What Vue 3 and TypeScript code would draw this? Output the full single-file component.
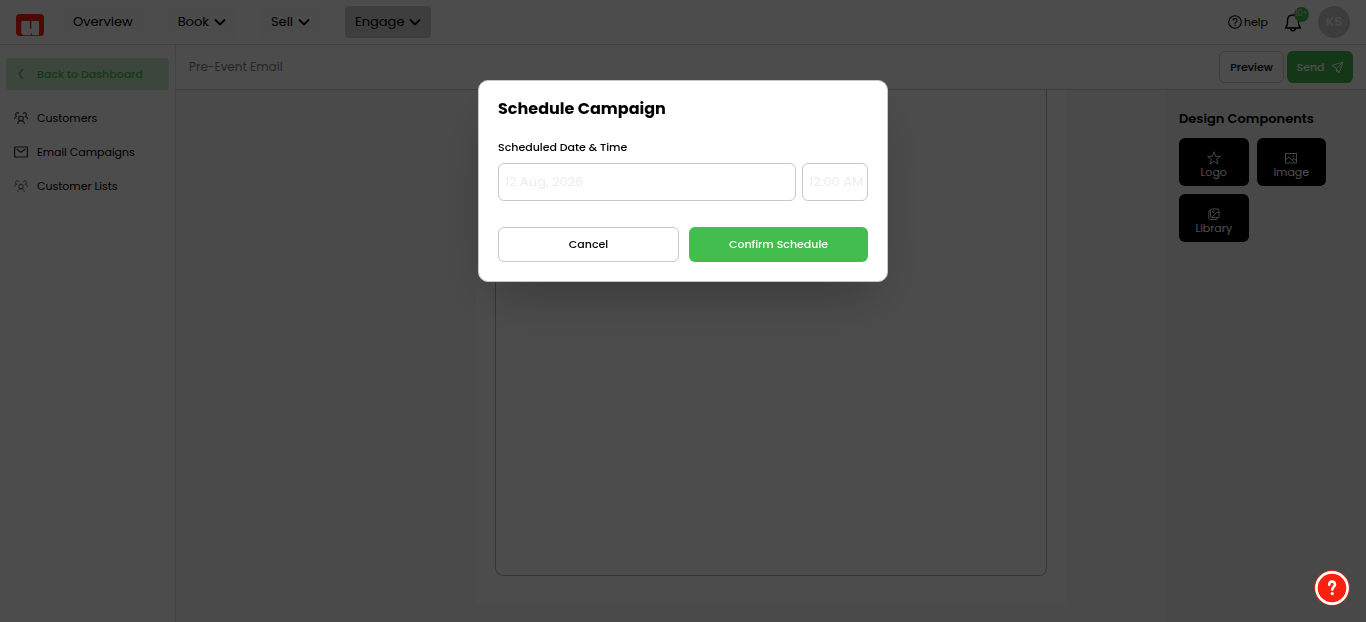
<script setup lang="ts">
import { ref } from 'vue'

interface NavItem { label: string; menu: boolean; active: boolean }
interface SideItem { label: string; icon: 'people' | 'mail' | 'peopleThin' }
interface Tile { label: string; icon: 'star' | 'image' | 'library' }

const nav: NavItem[] = [
  { label: 'Overview', menu: false, active: false },
  { label: 'Book', menu: true, active: false },
  { label: 'Sell', menu: true, active: false },
  { label: 'Engage', menu: true, active: true },
]
const side: SideItem[] = [
  { label: 'Customers', icon: 'people' },
  { label: 'Email Campaigns', icon: 'mail' },
  { label: 'Customer Lists', icon: 'peopleThin' },
]
const tiles: Tile[] = [
  { label: 'Logo', icon: 'star' },
  { label: 'Image', icon: 'image' },
  { label: 'Library', icon: 'library' },
]
const campaign = ref('Pre-Event Email')
const date = ref('')
const time = ref('')
</script>

<template>
  <div class="page">
    <header class="topbar">
      <a class="logo" href="#" aria-label="Home">
        <svg width="28" height="22" viewBox="0 0 28 22">
          <rect width="28" height="22" rx="4" fill="#ff2116" />
          <path d="M6.500 7h6.300q1 0 1 1v6q0 1 .8 1t.8-1V8q0-1 1-1H22q1 0 1 1v12.500q0 .7-.7.700h-5.600q-.7 0-.7-.7V18.500q-.8 2.700-3 2.700H7.500q-2.200-.4-2.200-3V8q0-1 1.200-1z" fill="#fff" />
        </svg>
      </a>
      <nav class="nav">
        <button v-for="n in nav" :key="n.label" type="button" class="nav-item" :class="{ active: n.active }">
          {{ n.label }}
          <svg v-if="n.menu" width="12" height="8" viewBox="0 0 12 8" fill="none" stroke="currentColor" stroke-width="1.800"><path d="M1 1.500l5 5 5-5" /></svg>
        </button>
      </nav>
      <div class="tools">
        <a class="help" href="#">
          <svg width="14" height="14" viewBox="0 0 14 14" fill="none" stroke="currentColor" stroke-width="1.100">
            <circle cx="7" cy="7" r="6.300" />
            <path d="M5 5.600a2 2 0 1 1 3 1.700c-.7.400-1 .7-1 1.500" /><path d="M7 9.800v1.200" />
          </svg>
          help
        </a>
        <button type="button" class="bell" aria-label="Notifications">
          <svg width="18" height="19" viewBox="0 0 18 19" fill="none" stroke="currentColor" stroke-width="1.400" stroke-linejoin="round">
            <path d="M1.500 15h15c-1.500-1.500-2-2.500-2-5V7.500C14.500 4 12.300 2 9 2S3.500 4 3.500 7.500V10c0 2.500-.5 3.500-2 5z" />
            <path d="M6.500 15.500c.4 3 4.600 3 5 0" />
          </svg>
          <span class="badge">10+</span>
        </button>
        <span class="avatar">KS</span>
      </div>
    </header>

    <div class="body">
      <aside class="sidebar">
        <a class="back" href="#">
          <svg width="14" height="12" viewBox="0 0 14 12" fill="none" stroke="currentColor" stroke-width="1.400"><path d="M9 1L5 6l4 5" /></svg>
          Back to Dashboard
        </a>
        <a v-for="s in side" :key="s.label" class="side-item" href="#">
          <svg v-if="s.icon === 'mail'" width="14" height="14" viewBox="0 0 14 14" fill="none" stroke="currentColor" stroke-width="1.200">
            <rect x=".6" y="2" width="12.800" height="10" rx=".6" /><path d="M2.500 4L7 7.200 11.500 4" />
          </svg>
          <svg v-else width="14" height="14" viewBox="0 0 14 14" fill="none" stroke="currentColor" :stroke-width="s.icon === 'people' ? 1.100 : 0.800">
            <circle cx="7" cy="7.500" r="2.300" />
            <path d="M3.700 13c.3-4.300 6.300-4.300 6.600 0M4.700 2.800C4 1 1.500 1.500 1.700 3.500c0 1 .3 1.500.8 2C1.200 6 .6 6.700.5 8M9.300 2.800c.7-1.800 3.200-1.300 3 .7 0 1-.3 1.500-.8 2 1.300.5 1.900 1.200 2 2.500" />
          </svg>
          {{ s.label }}
        </a>
      </aside>

      <main class="main">
        <div class="subbar">
          <input v-model="campaign" class="name" type="text" aria-label="Campaign name" />
          <button type="button" class="preview">Preview</button>
          <button type="button" class="send">
            Send
            <svg width="13" height="13" viewBox="0 0 13 13" fill="none" stroke="currentColor" stroke-linejoin="round"><path d="M12 1L1 4.500l4.500 3L8 12zM12 1L5.500 7.500V11l1.300-1.800" /></svg>
          </button>
        </div>
        <div class="workspace">
          <section class="canvas">
            <div class="sheet"><div class="frame"></div></div>
          </section>
          <section class="components">
            <h2>Design Components</h2>
            <div class="tiles">
              <button v-for="t in tiles" :key="t.label" type="button" class="tile">
                <svg v-if="t.icon === 'star'" width="14" height="14" viewBox="0 0 14 14" fill="none" stroke="currentColor" stroke-width=".9" stroke-linejoin="round"><path d="M7 .7l1.600 4.600h4.900L9.500 8.200l1.500 4.900L7 10.100l-4 3 1.500-4.900L.5 5.300h4.900z" /></svg>
                <svg v-else-if="t.icon === 'image'" width="14" height="14" viewBox="0 0 14 14" fill="none" stroke="currentColor" stroke-width=".9"><rect x="1.500" y="2.500" width="11" height="9.500" /><path d="M1.500 9L5 6l5.500 5.500M8 9l2-1.500 2.500 2" /><circle cx="9.300" cy="5.300" r=".5" /></svg>
                <svg v-else width="14" height="14" viewBox="0 0 14 14" fill="none" stroke="currentColor" stroke-width=".9"><rect x="3.500" y="2" width="8.500" height="8.500" rx="1" /><path d="M3.500 3.500q-1.700 0-1.700 1.500v6q0 1.500 1.500 1.500H9q1.500 0 1.500-1.800M5 10l4.500-4.500H12" /><circle cx="6.300" cy="4.800" r=".8" /></svg>
                {{ t.label }}
              </button>
            </div>
          </section>
        </div>
      </main>
    </div>

    <div class="overlay">
      <form class="modal" role="dialog" aria-modal="true" aria-labelledby="modal-title" @submit.prevent>
        <h1 id="modal-title">Schedule Campaign</h1>
        <label for="date">Scheduled Date &amp; Time</label>
        <div class="fields">
          <input id="date" v-model="date" class="date" type="text" placeholder="12 Aug, 2026" />
          <input v-model="time" class="time" type="text" placeholder="12:00 AM" aria-label="Time" />
        </div>
        <div class="actions">
          <button type="button" class="cancel">Cancel</button>
          <button type="submit" class="confirm">Confirm Schedule</button>
        </div>
      </form>
    </div>

    <button type="button" class="fab" aria-label="Open support">
      <svg width="36" height="36" viewBox="0 0 36 36" fill="none">
        <circle cx="18" cy="18" r="17.700" fill="#fb2010" />
        <circle cx="18" cy="18" r="15.600" stroke="#fff" stroke-width="2.600" />
        <path d="M15.200 14.700c0-4.400 5.800-4.200 5.800-.3 0 2.500-2.700 2.600-2.700 5.200" stroke="#fff" stroke-width="2.600" stroke-linecap="round" />
        <circle cx="18.200" cy="23.600" r="1.600" fill="#fff" />
      </svg>
    </button>
  </div>
</template>

<style>
body {
  margin: 0;
}
</style>

<style scoped>
* {
  box-sizing: border-box;
}
.page {
  display: flex;
  flex-direction: column;
  min-height: 100vh;
  background: #fff;
  color: #000;
  font-family: Poppins, Inter, "Liberation Sans", sans-serif;
  font-size: 11px;
}
button,
input {
  font: inherit;
  color: inherit;
}
button {
  border: 0;
  padding: 0;
  background: none;
}
a {
  color: inherit;
  text-decoration: none;
}
svg {
  display: block;
  flex: none;
}
.topbar {
  display: flex;
  align-items: center;
  height: 45px;
  padding: 0 16px;
  border-bottom: 1px solid #d4d4d4;
}
.logo {
  padding-top: 6px;
}
.nav {
  display: flex;
  gap: 25px;
  margin-left: 19px;
}
.nav-item {
  display: flex;
  align-items: center;
  gap: 5px;
  height: 32px;
  padding: 0 10px;
  border-radius: 4px;
  background: #fafafa;
  font-size: 13px;
}
.nav-item.active {
  background: #cfcfcf;
}
.tools {
  display: flex;
  align-items: center;
  margin-left: auto;
}
.help {
  display: flex;
  align-items: center;
  gap: 2px;
}
.bell {
  position: relative;
  margin: 0 16px;
}
.badge {
  position: absolute;
  top: -6px;
  right: -7px;
  width: 15px;
  height: 15px;
  border-radius: 50%;
  background: #44bd4f;
  color: #ddd;
  font-size: 8px;
  line-height: 13px;
  text-align: center;
}
.avatar {
  width: 32px;
  height: 32px;
  border-radius: 50%;
  background: #c8c8c8;
  color: #f5f5f5;
  font-size: 13px;
  font-weight: 600;
  line-height: 32px;
  text-align: center;
}
.body {
  display: flex;
  flex: 1;
}
.sidebar {
  flex: none;
  width: 176px;
  padding: 13px 6px;
  border-right: 1px solid #e5e5e5;
}
.back,
.side-item {
  display: flex;
  align-items: center;
  gap: 9px;
  height: 34px;
  padding: 0 8px;
}
.back {
  height: 32px;
  margin-bottom: 11px;
  border-radius: 4px;
  background: #c8ebcb;
  color: #44bd4f;
  font-weight: 500;
}
.side-item svg {
  color: #333;
}
.main {
  display: flex;
  flex: 1;
  flex-direction: column;
  min-width: 0;
}
.subbar {
  display: flex;
  align-items: center;
  height: 45px;
  padding: 0 13px;
  border-bottom: 1px solid #c8c8c8;
}
.name {
  flex: 1;
  min-width: 0;
  padding: 0;
  border: 0;
  background: none;
  color: #808080;
  font-size: 12px;
}
.preview,
.send {
  height: 32px;
  border-radius: 6px;
  font-weight: 500;
}
.preview {
  width: 65px;
  margin-right: 3px;
  border: 1px solid #c8c8c8;
}
.send {
  display: flex;
  align-items: center;
  justify-content: center;
  gap: 6px;
  width: 66px;
  background: #44bd4f;
  color: #fff;
}
.workspace {
  display: flex;
  flex: 1;
}
.canvas {
  display: flex;
  flex: 1;
  justify-content: center;
  padding: 0 0 19px 200px;
  background: #f7f7f7;
}
.sheet {
  display: flex;
  width: 590px;
  padding: 0 19px 27px;
  background: #fff;
}
.frame {
  flex: 1;
  border: 1px solid #b4b4b4;
  border-top: 0;
  border-radius: 0 0 8px 8px;
}
.components {
  flex: none;
  width: 200px;
  padding: 20px 13px;
  background: #f0f0f0;
}
.components h2 {
  margin: 0 0 10px;
  font-size: 13px;
  font-weight: 600;
  line-height: 18px;
}
.tiles {
  display: grid;
  grid-template-columns: 1fr 1fr;
  gap: 8px;
  max-width: 147px;
}
.tile {
  display: flex;
  flex-direction: column;
  align-items: center;
  justify-content: center;
  height: 48px;
  padding-top: 6px;
  border-radius: 6px;
  background: #000;
  color: #fff;
  line-height: 14px;
}
.overlay {
  position: fixed;
  inset: 0;
  display: flex;
  align-items: flex-start;
  justify-content: center;
  padding-top: 80px;
  background: rgba(0, 0, 0, 0.7);
}
.modal {
  width: 410px;
  padding: 19px;
  border: 1px solid #c8c8c8;
  border-radius: 10px;
  background: #fff;
  box-shadow: 0 25px 50px -12px rgba(0, 0, 0, 0.25);
}
.modal h1 {
  margin: 0 0 20px;
  font-size: 16px;
  font-weight: 700;
  line-height: 18px;
}
.modal label {
  display: block;
  margin-bottom: 7px;
  font-weight: 500;
  line-height: 18px;
}
.fields {
  display: flex;
  gap: 6px;
  margin-bottom: 26px;
}
.fields input {
  min-width: 0;
  height: 38px;
  padding: 0 0 0 6px;
  border: 1px solid #c8c8c8;
  border-radius: 6px;
  background: #fff;
  font-size: 13px;
}
.fields input::placeholder {
  color: #ececec;
  opacity: 1;
}
.date {
  flex: 1;
}
.time {
  width: 66px;
}
.actions {
  display: flex;
  gap: 10px;
}
.actions button {
  flex: 1;
  height: 35px;
  border-radius: 6px;
  font-weight: 500;
}
.cancel {
  border: 1px solid #c8c8c8;
}
.confirm {
  background: #44bd4f;
  color: #fff;
}
.fab {
  position: fixed;
  right: 16px;
  bottom: 16px;
}
</style>
